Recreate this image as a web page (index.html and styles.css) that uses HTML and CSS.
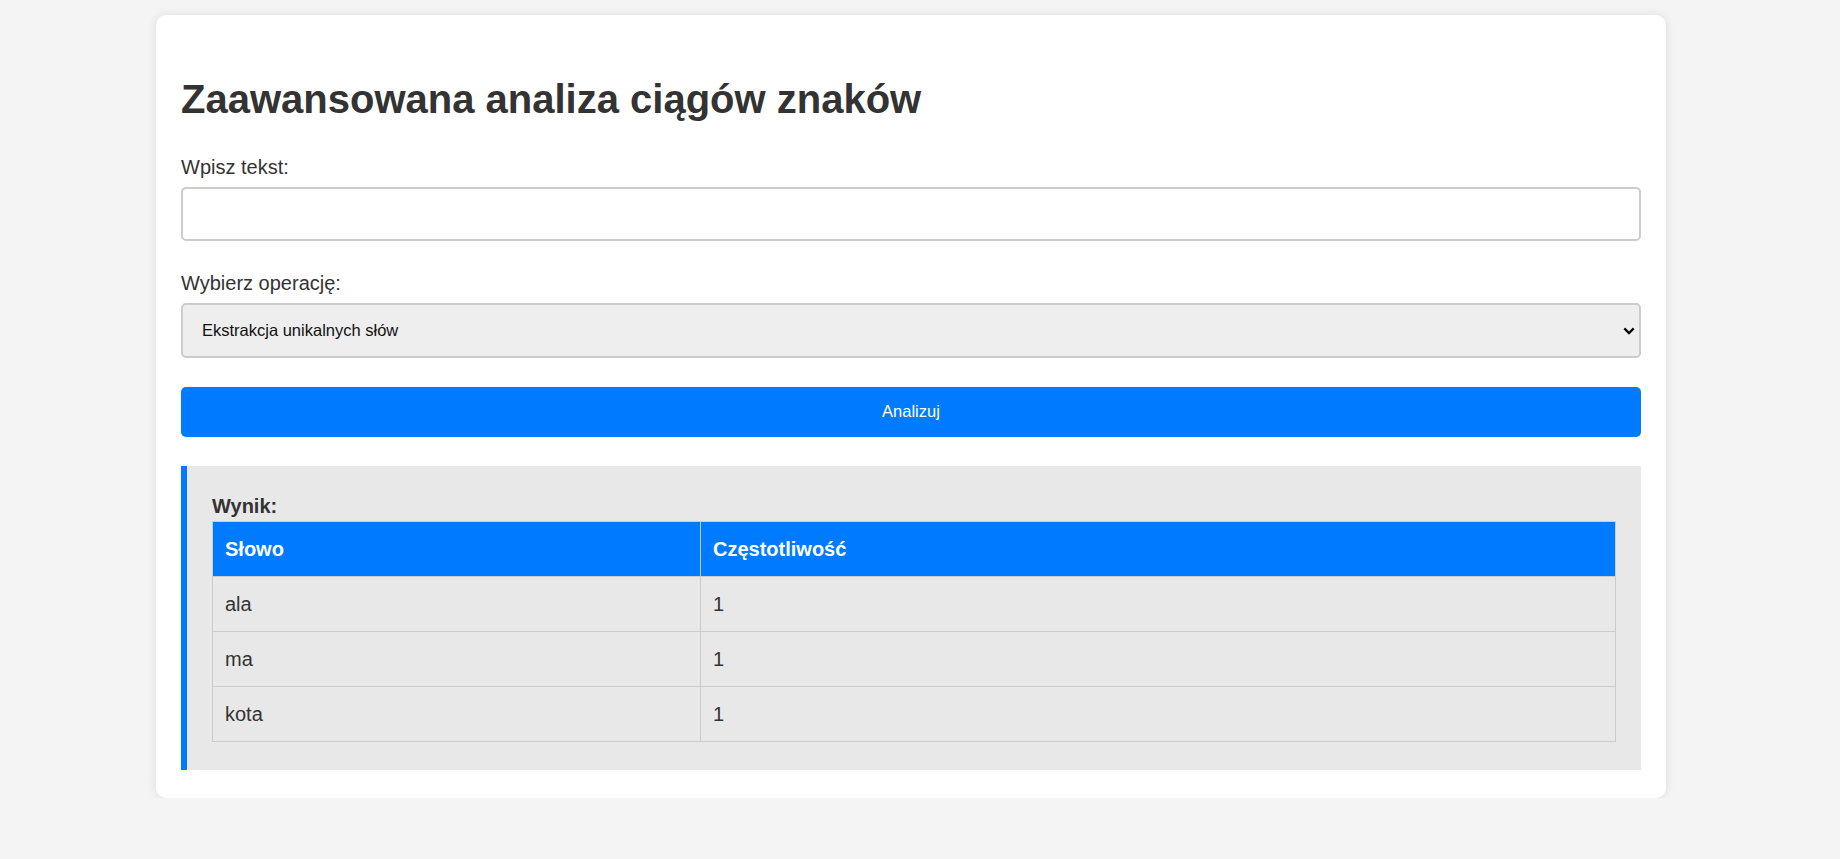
FILE: index.html
```html
<!DOCTYPE html>
<html lang="pl">
<head>
<meta charset="utf-8">
<title>Zaawansowana analiza ciągów znaków</title>
<link rel="stylesheet" href="styles.css">
</head>
<body>
<div class="card">
  <h1 class="title">Zaawansowana analiza ciągów znaków</h1>
  <label class="label" for="text">Wpisz tekst:</label>
  <input class="text-input" id="text" type="text">
  <label class="label label-op" for="op">Wybierz operację:</label>
  <div class="select-wrap">
    <select class="select" id="op">
      <option>Ekstrakcja unikalnych słów</option>
    </select>
    <svg class="select-arrow" width="12" height="8" viewBox="0 0 12 8" aria-hidden="true"><polyline points="1.3,1.4 6,6.1 10.7,1.4" fill="none" stroke="#000" stroke-width="2.2"/></svg>
  </div>
  <button class="button" type="button">Analizuj</button>
  <div class="result">
    <div class="result-title">Wynik:</div>
    <table class="table">
      <thead>
        <tr><th class="col-word">Słowo</th><th>Częstotliwość</th></tr>
      </thead>
      <tbody>
        <tr><td>ala</td><td>1</td></tr>
        <tr><td>ma</td><td>1</td></tr>
        <tr><td>kota</td><td>1</td></tr>
      </tbody>
    </table>
  </div>
</div>
</body>
</html>
```
FILE: styles.css
```css
html, body {
  margin: 0;
}
body {
  background: #f4f4f4;
  font-family: "Liberation Sans", Arial, sans-serif;
  font-size: 20px;
  line-height: 1.5;
  color: #333;
  padding: 15px 18px 0 0;
}
.card {
  box-sizing: border-box;
  width: 1510px;
  margin: 0 auto;
  background: #fff;
  border-radius: 10px;
  box-shadow: 0 0 10px rgba(0, 0, 0, 0.1);
  padding: 25px 25px 27.7px;
}
.title {
  margin: 35px 0 0;
  font-size: 40px;
  line-height: 48px;
  font-weight: bold;
  color: #333;
}
.label {
  display: block;
  margin: 29px 0 5px;
  color: #333;
}
.label-op {
  margin-top: 27.5px;
}
.text-input {
  display: block;
  box-sizing: border-box;
  width: 100%;
  height: 53.5px;
  margin: 0;
  border: 2px solid #ccc;
  border-radius: 5px;
  background: #fff;
  font-family: inherit;
  font-size: 16.5px;
  padding: 0 12px;
}
.select-wrap {
  position: relative;
}
.select {
  display: block;
  box-sizing: border-box;
  width: 100%;
  height: 55px;
  margin: 0;
  border: 2px solid #ccc;
  border-radius: 5px;
  background-color: #eee;
  color: #111;
  font-family: inherit;
  font-size: 16.5px;
  line-height: 1.2;
  padding: 0 30px 0 19px;
  -webkit-appearance: none;
  appearance: none;
}
.select-arrow {
  position: absolute;
  right: 5.6px;
  top: 50%;
  transform: translateY(-50%);
  pointer-events: none;
}
.button {
  display: block;
  box-sizing: border-box;
  width: 100%;
  height: 49.5px;
  margin: 29px 0 0;
  border: none;
  border-radius: 5px;
  background: #007bff;
  color: #fff;
  font-family: inherit;
  font-size: 16.5px;
  padding: 0;
}
.result {
  margin-top: 29px;
  background: #e8e8e8;
  border-left: 6px solid #007bff;
  padding: 25px 25px 28.6px;
}
.result-title {
  font-weight: bold;
  color: #333;
}
.table {
  width: 100%;
  border-collapse: collapse;
}
.table th,
.table td {
  border: 1px solid #ccc;
  padding: 12px;
  text-align: left;
}
.table th {
  background: #007bff;
  color: #fff;
  font-weight: bold;
}
.table .col-word {
  width: 463px;
}
.table td {
  color: #333;
}
```
